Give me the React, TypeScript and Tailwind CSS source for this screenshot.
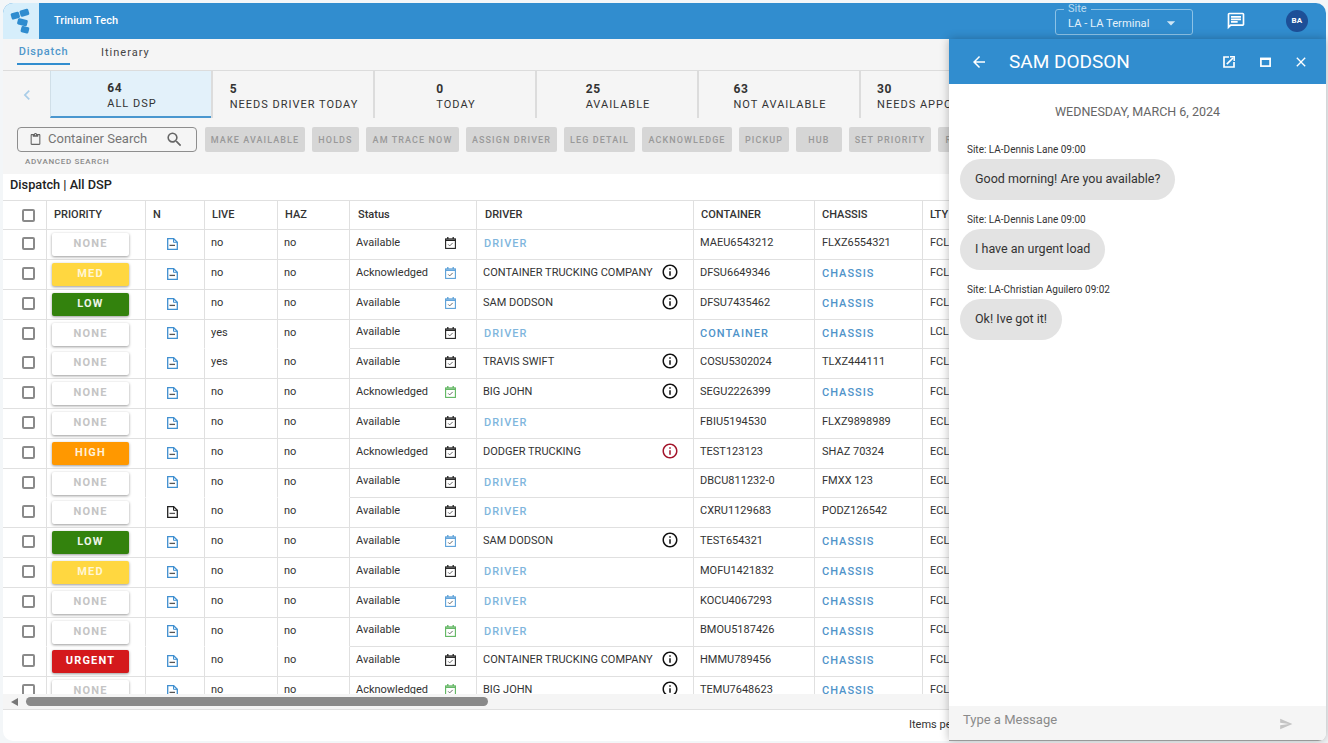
import React from "react";
import { MdInfoOutline, MdOutlineChat, MdOutlineArrowBack, MdClose, MdSend, MdSearch, MdOutlineContentPaste, MdArrowDropDown, MdChevronLeft } from "react-icons/md";

type Row = { p: string; live?: string; st: string; cal: string; driver?: string; info?: string; cont?: string; ch?: string; l: string; n?: string; merge?: boolean };

const rows: Row[] = [
  { p: "NONE", st: "Available", cal: "k", cont: "MAEU6543212", ch: "FLXZ6554321", l: "FCL" },
  { p: "MED", st: "Acknowledged", cal: "b", driver: "CONTAINER TRUCKING COMPANY", info: "k", cont: "DFSU6649346", l: "FCL" },
  { p: "LOW", st: "Available", cal: "b", driver: "SAM DODSON", info: "k", cont: "DFSU7435462", l: "FCL" },
  { p: "NONE", live: "yes", st: "Available", cal: "k", l: "LCL", merge: true },
  { p: "NONE", live: "yes", st: "Available", cal: "k", driver: "TRAVIS SWIFT", info: "k", cont: "COSU5302024", ch: "TLXZ444111", l: "FCL" },
  { p: "NONE", st: "Acknowledged", cal: "g", driver: "BIG JOHN", info: "k", cont: "SEGU2226399", l: "FCL" },
  { p: "NONE", st: "Available", cal: "k", cont: "FBIU5194530", ch: "FLXZ9898989", l: "ECL" },
  { p: "HIGH", st: "Acknowledged", cal: "k", driver: "DODGER TRUCKING", info: "r", cont: "TEST123123", ch: "SHAZ 70324", l: "ECL" },
  { p: "NONE", st: "Available", cal: "k", cont: "DBCU811232-0", ch: "FMXX 123", l: "ECL", merge: true },
  { p: "NONE", n: "k", st: "Available", cal: "k", cont: "CXRU1129683", ch: "PODZ126542", l: "ECL" },
  { p: "LOW", st: "Available", cal: "b", driver: "SAM DODSON", info: "k", cont: "TEST654321", l: "ECL" },
  { p: "MED", st: "Available", cal: "k", cont: "MOFU1421832", l: "ECL" },
  { p: "NONE", st: "Available", cal: "b", cont: "KOCU4067293", l: "FCL" },
  { p: "NONE", st: "Available", cal: "g", cont: "BMOU5187426", l: "FCL", merge: true },
  { p: "URGENT", st: "Available", cal: "k", driver: "CONTAINER TRUCKING COMPANY", info: "k", cont: "HMMU789456", l: "FCL" },
  { p: "NONE", st: "Acknowledged", cal: "g", driver: "BIG JOHN", info: "k", cont: "TEMU7648623", l: "FCL" },
];

const stats = [
  ["64", "ALL DSP"], ["5", "NEEDS DRIVER TODAY"], ["0", "TODAY"], ["25", "AVAILABLE"], ["63", "NOT AVAILABLE"], ["30", "NEEDS APPOINTMENT"],
];

const actions: [string, string][] = [
  ["MAKE AVAILABLE", "w-[100px]"], ["HOLDS", "w-[47px]"], ["AM TRACE NOW", "w-[93px]"], ["ASSIGN DRIVER", "w-[91px]"], ["LEG DETAIL", "w-[71px]"], ["ACKNOWLEDGE", "w-[90px]"], ["PICKUP", "w-[50px]"], ["HUB", "w-[46px]"], ["SET PRIORITY", "w-[82px]"], ["RELEASE", "w-[60px]"],
];

const prioClass: Record<string, string> = {
  NONE: "bg-white text-[#c4c4c4]",
  MED: "bg-[#ffd740] text-[#fff6d5]",
  LOW: "bg-[#33820d] text-[#eef5e8]",
  HIGH: "bg-[#ff9800] text-[#fff1d9]",
  URGENT: "bg-[#d4191c] text-white",
};
const calClass: Record<string, string> = { k: "text-[#222]", b: "text-[#5a9fd8]", g: "text-[#5fb560]" };

function Box() {
  return <span className="block w-[13px] h-[13px] rounded-[2px] border-2 border-[#8a8a8a] bg-white" />;
}
function Link({ t }: { t: string }) {
  return <span className="text-[11px] font-medium tracking-[1px] text-[#4f93c9]">{t}</span>;
}
function DocIcon({ cls }: { cls: string }) {
  return (
    <svg viewBox="0 0 11 12" className={`w-[11px] h-[12px] block ${cls}`} fill="none" stroke="currentColor">
      <path d="M.7.7h6l3.6 3.6v7H.7z" strokeWidth="1.3" />
      <path d="M6.5.7v3.6h3.8" strokeWidth="1" />
      <path d="M2.5 7.4h5.5" strokeWidth="1.3" stroke="#555" />
    </svg>
  );
}
function CalIcon({ cls }: { cls: string }) {
  return (
    <svg viewBox="0 0 11 12" className={`w-[11px] h-[12px] block ${cls}`} fill="none" stroke="currentColor">
      <rect x=".6" y="1.9" width="9.8" height="9.5" strokeWidth="1.1" />
      <path d="M.6 3.2h9.8" strokeWidth="1.5" />
      <path d="M2.8 0v2M8.2 0v2" strokeWidth="1.3" />
      <path d="M3.2 7.4l1.5 1.5 3-3" strokeWidth="1" stroke="#666" />
    </svg>
  );
}

function TableRow({ r }: { r: Row }) {
  const b = r.merge ? "border-b border-b-transparent" : "border-b border-b-[#e0e0e0]";
  const cell = "h-full flex items-center border-r border-r-[#e0e0e0] shrink-0";
  const line = "border-b border-b-[#e0e0e0]";
  const h = r.merge ? "h-[29px]" : "h-[30px]";
  return (
    <div className={`flex ${h} text-[11px] text-[#333]`}>
      <div className={`${cell} ${b} w-[44px] pl-[19px] pb-[2px]`}><Box /></div>
      <div className={`${cell} ${b} w-[99px] pl-[5px]`}>
        <div className={`w-[77px] h-[23px] rounded-[2px] flex items-center justify-center text-[11px] font-bold tracking-[1.2px] shadow-[0_1px_3px_rgba(0,0,0,0.4)] ${prioClass[r.p]}`}>{r.p}</div>
      </div>
      <div className={`${cell} ${b} w-[59px] pl-[21px] pb-[2px]`}>
        <DocIcon cls={r.n === "k" ? "text-[#222]" : "text-[#3f8fd0]"} />
      </div>
      <div className={`${cell} ${b} w-[73px] pl-[6px] pb-[2px]`}>{r.live ?? "no"}</div>
      <div className={`${cell} ${b} w-[72px] pl-[6px] pb-[2px]`}>no</div>
      <div className={`${cell} ${line} w-[127px] pl-[6px] justify-between pr-[20px]`}>
        <span className="mb-[3px]">{r.st}</span>
        <CalIcon cls={`mb-[3px] ${calClass[r.cal]}`} />
      </div>
      <div className={`${cell} ${line} w-[217px] justify-between ${r.driver ? "pl-[6px]" : "pl-[7px]"} pr-[14px]`}>
        {r.driver ? <span className="mb-[3px]">{r.driver}</span> : <span className="text-[11px] font-medium tracking-[1px] text-[#7fb6dd]">DRIVER</span>}
        {r.info && <MdInfoOutline className={`w-[18px] h-[18px] mb-[5px] ${r.info === "r" ? "text-[#a3152b]" : "text-[#111]"}`} />}
      </div>
      <div className={`${cell} ${line} w-[121px] pl-[6px]`}>{r.cont ? <span className="mb-[3px]">{r.cont}</span> : <Link t="CONTAINER" />}</div>
      <div className={`${cell} ${line} w-[108px] pl-[7px]`}>{r.ch ? <span className="mb-[3px]">{r.ch}</span> : <Link t="CHASSIS" />}</div>
      <div className={`${cell} ${line} w-[100px] pl-[7px] pb-[3px]`}>{r.l}</div>
    </div>
  );
}

function Head({ w, t, cls = "" }: { w: string; t: string; cls?: string }) {
  return <div className={`${w} h-full flex items-center border-r border-r-[#e0e0e0] shrink-0 ${cls}`}>{t}</div>;
}

export default function App() {
  return (
    <div className="relative w-[1328px] h-[743px] overflow-hidden bg-[#f3f6f8] pt-[3px] px-[3px] pb-[2px] font-['Roboto',sans-serif]">
      <div className="w-[1323px] h-[738px] rounded-[10px] overflow-hidden bg-white flex flex-col">
        <header className="h-[36px] shrink-0 bg-[#318dcf] flex items-center text-white">
          <div className="w-[36px] h-full bg-[#d6eefb]">
            <svg viewBox="3 3 36 36" className="w-[36px] h-[36px] block">
              <g fill="#2f8ccf">
                <rect x="11" y="12.5" width="8.5" height="6.5" rx="1.4" transform="rotate(-16 15 15.5)" />
                <rect x="20" y="9.5" width="9" height="6.5" rx="1.4" transform="rotate(-16 24.5 13)" />
                <rect x="17.5" y="19" width="10" height="6.5" rx="1.4" transform="rotate(14 22.5 22)" />
                <rect x="21" y="26.5" width="8" height="6.5" rx="1.4" transform="rotate(14 25 29.5)" />
              </g>
            </svg>
          </div>
          <div className="ml-[15px] text-[11px] font-medium">Trinium Tech</div>
          <div className="ml-auto flex items-center">
            <div className="relative w-[138px] h-[26px] mt-[2px] rounded-[3px] border border-[#8cc2e6] pl-[12px] flex items-center text-[11.2px] text-[#e4f1fa]">
              <span className="absolute -top-[7px] left-[8px] px-[4px] bg-[#318dcf] text-[11px] leading-[12px] text-[#b9dbf1]">Site</span>
              <span className="pt-[4px]">LA - LA Terminal</span>
              <MdArrowDropDown className="absolute left-[105px] top-[3px] w-[20px] h-[20px] text-[#cfe6f5]" />
            </div>
            <MdOutlineChat className="ml-[33px] w-[20px] h-[20px] text-white" />
            <div className="ml-[40px] mr-[18px] w-[22px] h-[22px] rounded-full bg-[#1d4f97] flex items-center justify-center text-[8px] font-bold tracking-[0.3px]">BA</div>
          </div>
        </header>

        <div className="h-[32px] shrink-0 bg-[#f5f5f5] flex pl-[14px] text-[11px] tracking-[0.8px] font-medium border-b border-b-[#dcdcdc]">
          <div className="h-[26px] w-[53px] pt-[2px] flex items-center justify-center border-b-2 border-b-[#318dcf] text-[#4f97cb]">Dispatch</div>
          <div className="h-[26px] pt-[2px] ml-[31px] flex items-center font-normal tracking-[1px] text-[#444]">Itinerary</div>
        </div>

        <div className="h-[47px] shrink-0 bg-[#f5f5f5] flex">
          <div className="w-[47px] shrink-0 flex items-center justify-center pl-[1px]">
            <MdChevronLeft className="w-[20px] h-[20px] text-[#a9cde8]" />
          </div>
          {stats.map(([n, t], i) => (
            <div key={t} className={`${i === 0 ? "w-[161px] bg-[#e3f1fa] border-b-[2px] border-b-[#4a97cf] border-l border-l-[#d0dfe8]" : "w-[162px] border-l-2 border-l-[#dcdcdc]"} shrink-0 flex justify-center items-center`}>
              <div className="flex flex-col items-start pt-[4px] pl-[2px]">
                <div className="text-[12px] leading-[16px] font-bold tracking-[0.6px] text-[#333]">{n}</div>
                <div className="text-[11px] leading-[16px] tracking-[1px] text-[#333]">{t}</div>
              </div>
            </div>
          ))}
        </div>

        <div className="h-[56px] shrink-0 bg-[#f5f5f5] pt-[9px] pl-[14px]">
          <div className="flex gap-[7px] items-start">
            <div className="w-[180px] h-[25px] shrink-0 rounded-[4px] border border-[#8e8e8e] flex items-center pl-[11px] pb-[1px] text-[13px] text-[#757575] mr-[1px]">
              <MdOutlineContentPaste className="w-[13px] h-[13px] text-[#666]" />
              <span className="ml-[6px]">Container Search</span>
              <MdSearch className="ml-[18px] w-[19px] h-[19px] text-[#666]" />
            </div>
            {actions.map(([a, w]) => (
              <div key={a} className={`${w} h-[25px] pt-[2px] shrink-0 rounded-[2px] bg-[#d6d6d6] flex items-center justify-center text-[9px] font-medium tracking-[1.1px] text-[#999]`}>{a}</div>
            ))}
          </div>
          <div className="mt-[4px] ml-[8px] text-[8px] font-medium tracking-[0.7px] text-[#8a8a8a]">ADVANCED SEARCH</div>
        </div>

        <div className="h-[26px] shrink-0 flex items-center pl-[7px] pb-[4px] text-[12.75px] font-medium text-[#222]">Dispatch | All DSP</div>

        <div className="flex h-[30px] shrink-0 text-[11px] font-medium text-[#333] border-y border-y-[#e0e0e0]">
          <div className="w-[44px] h-full flex items-center pl-[19px] border-r border-r-[#e0e0e0] shrink-0"><Box /></div>
          <Head w="w-[99px]" t="PRIORITY" cls="pl-[7px]" />
          <Head w="w-[59px]" t="N" cls="pl-[7px]" />
          <Head w="w-[73px]" t="LIVE" cls="pl-[7px]" />
          <Head w="w-[72px]" t="HAZ" cls="pl-[7px]" />
          <Head w="w-[127px]" t="Status" cls="pl-[8px]" />
          <Head w="w-[217px]" t="DRIVER" cls="pl-[8px]" />
          <Head w="w-[121px]" t="CONTAINER" cls="pl-[7px]" />
          <Head w="w-[108px]" t="CHASSIS" cls="pl-[7px]" />
          <Head w="w-[100px]" t="LTY" cls="pl-[7px]" />
        </div>

        <div className="h-[464px] shrink-0 overflow-hidden">
          {rows.map((r, i) => <TableRow key={i} r={r} />)}
        </div>

        <div className="h-[16px] shrink-0 bg-[#f5f5f5] flex items-center border-b border-b-[#e0e0e0]">
          <svg viewBox="0 0 7 8" className="ml-[8px] w-[7px] h-[8px] block"><polygon points="7,0 7,8 0,4" fill="#777" /></svg>
          <div className="ml-[8px] w-[462px] h-[9px] rounded-full bg-[#8a8a8a]" />
        </div>

        <div className="flex-1 flex items-center pl-[906px] text-[11px] text-[#333] whitespace-nowrap">Items per page</div>
      </div>

      <aside className="absolute left-[949px] top-[39px] w-[377px] h-[702px] bg-white rounded-br-[8px] shadow-[0_0_10px_rgba(0,0,0,0.28)] flex flex-col overflow-hidden">
        <div className="h-[45px] shrink-0 bg-[#318dcf] flex items-center text-white">
          <MdOutlineArrowBack className="ml-[21px] w-[18px] h-[18px]" />
          <div className="ml-[21px] text-[19px] font-normal leading-none">SAM DODSON</div>
          <svg viewBox="0 0 12 12" className="ml-auto w-[12px] h-[12px] block" fill="none" stroke="#fff">
            <path d="M6 1H1v10h10V6" strokeWidth="1.7" />
            <path d="M3.8 8.2L10 2" strokeWidth="1.7" />
            <path d="M7 .8h4.2V5" strokeWidth="1.5" />
          </svg>
          <svg viewBox="0 0 11 10" className="ml-[25px] w-[11px] h-[10px] block" fill="none" stroke="#fff">
            <rect x=".9" y="1.4" width="9.2" height="7.7" strokeWidth="1.7" />
            <path d="M0 2h11" strokeWidth="2" />
          </svg>
          <MdClose className="ml-[22px] mr-[17px] w-[16px] h-[16px]" />
        </div>
        <div className="flex-1 pt-[19px] px-[11px]">
          <div className="text-center text-[12.5px] leading-[18px] text-[#666]">WEDNESDAY, MARCH 6, 2024</div>
          <div className="mt-[23px] flex flex-col gap-[14px] items-start">
            {[["Site: LA-Dennis Lane 09:00", "Good morning! Are you available?"], ["Site: LA-Dennis Lane 09:00", "I have an urgent load"], ["Site: LA-Christian Aguilero 09:02", "Ok! Ive got it!"]].map(([s, m]) => (
              <div key={m} className="flex flex-col items-start">
                <div className="ml-[7px] text-[10px] leading-[12px] text-[#333]">{s}</div>
                <div className="mt-[3px] h-[41px] px-[15px] rounded-[21px] bg-[#e3e3e3] flex items-center text-[12.5px] text-[#333]">{m}</div>
              </div>
            ))}
          </div>
        </div>
        <div className="h-[35px] shrink-0 bg-[#f5f5f5] border-b border-b-[#999] flex items-start pl-[14px] pt-[4px] text-[13px] text-[#8a8a8a] relative">
          Type a Message
          <MdSend className="absolute right-[33px] top-[11px] w-[14px] h-[14px] text-[#c4c4c4]" />
        </div>
      </aside>
    </div>
  );
}
